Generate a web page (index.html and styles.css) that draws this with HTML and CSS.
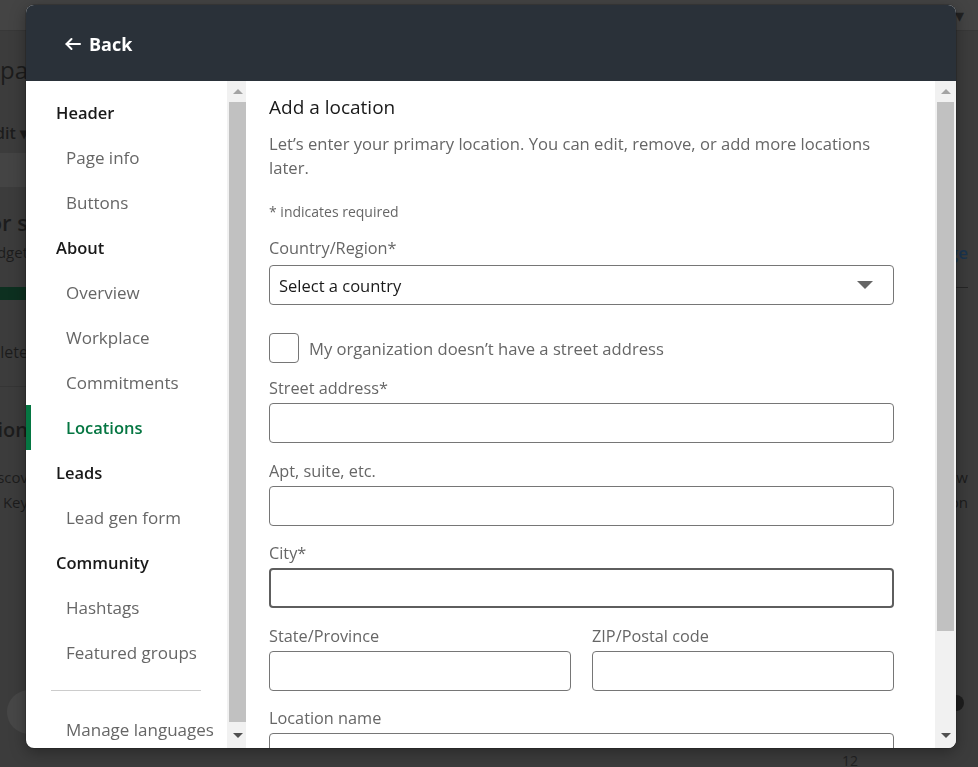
FILE: index.html
```html
<!DOCTYPE html>
<html lang="en">
<head>
  <meta charset="UTF-8">
  <title>Edit page – Add a location</title>
  <link rel="stylesheet" href="styles.css">
</head>
<body>
  <!-- Page underneath the modal (already dimmed) -->
  <div class="page">
    <div class="page-top"></div>
    <div class="page-cols">
      <div class="page-left">
        <div class="pg-title">Company pa</div>
        <div class="pg-drop">Edit &#9662;</div>
        <div class="pg-band"></div>
        <div class="pg-h2">Tips for s</div>
        <div class="pg-sub first">Budget</div>
        <div class="pg-progress"></div>
        <div class="pg-row">Complete</div>
        <div class="pg-h3">Location</div>
        <div class="pg-sub">Discov</div>
        <div class="pg-sub">Key</div>
        <div class="pg-fab"></div>
      </div>
      <div class="page-right">
        <div class="pg-caret">&#9662;</div>
        <div class="pg-link">Manage</div>
        <div class="pg-sub far">Follow</div>
        <div class="pg-sub">Organization</div>
        <div class="pg-dot"></div>
        <div class="pg-count">12</div>
      </div>
    </div>
  </div>

  <!-- Edit modal -->
  <div class="modal">
    <div class="modal-head">
      <svg class="back-arrow" width="16" height="14" viewBox="0 0 16 14" fill="none" stroke="#fff" stroke-width="2" stroke-linecap="round" stroke-linejoin="round">
        <path d="M15 7H1.5"/>
        <path d="M6.5 2 1.5 7l5 5"/>
      </svg>
      <span>Back</span>
    </div>

    <div class="modal-body">
      <nav class="nav">
        <div class="nav-item section">Header</div>
        <div class="nav-item">Page info</div>
        <div class="nav-item">Buttons</div>
        <div class="nav-item section">About</div>
        <div class="nav-item">Overview</div>
        <div class="nav-item">Workplace</div>
        <div class="nav-item">Commitments</div>
        <div class="nav-item active">Locations</div>
        <div class="nav-item section">Leads</div>
        <div class="nav-item">Lead gen form</div>
        <div class="nav-item section">Community</div>
        <div class="nav-item">Hashtags</div>
        <div class="nav-item">Featured groups</div>
        <div class="nav-divider"></div>
        <div class="nav-item">Manage languages</div>
      </nav>

      <div class="scroll scroll-nav">
        <div class="scroll-arrow"><span class="tri-up"></span></div>
        <div class="scroll-thumb"></div>
        <div class="scroll-space"></div>
        <div class="scroll-arrow"><span class="tri-down"></span></div>
      </div>

      <main class="main">
        <h2 class="form-title">Add a location</h2>
        <p class="form-intro">Let’s enter your primary location. You can edit, remove, or add more locations later.</p>
        <p class="form-req">* indicates required</p>

        <label class="field-label tight">Country/Region*</label>
        <div class="select">
          <span>Select a country</span>
          <span class="select-caret"></span>
        </div>

        <div class="check-row">
          <span class="checkbox"></span>
          <span class="check-label">My organization doesn’t have a street address</span>
        </div>

        <label class="field-label first">Street address*</label>
        <div class="input"></div>

        <label class="field-label">Apt, suite, etc.</label>
        <div class="input"></div>

        <label class="field-label">City*</label>
        <div class="input hover"></div>

        <div class="field-pair">
          <div>
            <label class="field-label">State/Province</label>
            <div class="input"></div>
          </div>
          <div>
            <label class="field-label">ZIP/Postal code</label>
            <div class="input"></div>
          </div>
        </div>

        <label class="field-label">Location name</label>
        <div class="input"></div>
      </main>

      <div class="scroll scroll-main">
        <div class="scroll-arrow"><span class="tri-up"></span></div>
        <div class="scroll-thumb"></div>
        <div class="scroll-space"></div>
        <div class="scroll-arrow"><span class="tri-down"></span></div>
      </div>
    </div>
  </div>
</body>
</html>
```

FILE: styles.css
```css
/* Base */
body {
  margin: 0;
  height: 767px;
  overflow: hidden;
  background: #3c3c3c;
  font-family: "Open Sans", "Noto Sans", sans-serif;
}

/* === Dimmed page behind the modal === */
.page {
  height: 100%;
  color: #1c1c1c;
}
.page-top {
  height: 30px;
  background: #444;
  border-bottom: 1px solid #383838;
}
.page-cols {
  display: flex;
  justify-content: space-between;
}
.page-left {
  width: 280px;
  margin-left: -252px;
  text-align: right;
}
.page-right {
  width: 170px;
  margin-right: 10px;
  margin-top: -26px;
  text-align: right;
}
.pg-title {
  font-size: 24px;
  line-height: 30px;
  margin-top: 24px;
}
.pg-drop {
  font-size: 16px;
  font-weight: 600;
  line-height: 24px;
  margin-top: 36px;
}
.pg-band {
  height: 34px;
  margin: 8px -40px 0 0;
  background: #444;
}
.pg-h2 {
  font-size: 22px;
  font-weight: 600;
  line-height: 30px;
  margin-top: 20px;
}
.pg-sub {
  font-size: 15px;
  line-height: 25px;
}
.pg-sub.first {
  margin-top: 3px;
}
.pg-progress {
  height: 13px;
  margin-top: 22px;
  background: #0d3020;
}
.pg-row {
  font-size: 16px;
  line-height: 24px;
  margin-top: 40px;
  padding-bottom: 22px;
  border-bottom: 1px solid #353535;
}
.pg-h3 {
  font-size: 20px;
  font-weight: 600;
  line-height: 28px;
  margin: 29px 0 21px;
}
.pg-fab {
  width: 44px;
  height: 44px;
  border-radius: 50%;
  background: #474747;
  margin: 175px 0 0 259px;
}
.pg-caret {
  font-size: 18px;
  line-height: 20px;
  color: #222;
  margin-right: 4px;
}
.pg-link {
  color: #1a3550;
  font-size: 17px;
  font-weight: 600;
  line-height: 24px;
  margin-top: 216px;
  padding-bottom: 22px;
  border-bottom: 1px solid #262626;
}
.pg-sub.far {
  margin-top: 177px;
}
.pg-dot {
  width: 16px;
  height: 16px;
  border-radius: 50%;
  background: #1e1e1e;
  margin: 180px 4px 0 auto;
}
.pg-count {
  font-size: 14px;
  line-height: 20px;
  margin: 40px 110px 0 0;
  color: #222;
}

/* === Modal === */
.modal {
  position: fixed;
  left: 26px;
  top: 5px;
  width: 930px;
  height: 743px;
  background: #fff;
  border-radius: 8px;
  overflow: hidden;
  display: flex;
  flex-direction: column;
  box-shadow: 0 0 0 1px rgba(0, 0, 0, 0.15), 0 4px 16px rgba(0, 0, 0, 0.35);
}
.modal-head {
  flex: none;
  height: 76px;
  background: #2a3139;
  color: #fff;
  display: flex;
  align-items: center;
  gap: 8px;
  padding: 2px 0 0 39px;
  box-sizing: border-box;
  font-size: 18px;
  font-weight: 700;
}
.back-arrow {
  margin-top: -1px;
}
.modal-body {
  flex: 1;
  display: flex;
  min-height: 0;
}

/* Left navigation */
.nav {
  width: 201px;
  flex: none;
  overflow: hidden;
  padding-top: 9px;
}
.nav-item {
  height: 45px;
  display: flex;
  align-items: center;
  padding-left: 40px;
  font-size: 17px;
  color: #666;
  white-space: nowrap;
}
.nav-item.section {
  padding-left: 30px;
  font-size: 16.5px;
  color: rgba(0, 0, 0, 0.9);
  font-weight: 600;
}
.nav-item.active {
  color: #057642;
  font-weight: 600;
  font-size: 16.5px;
  border-left: 5px solid #057642;
  padding-left: 35px;
}
.nav-divider {
  width: 150px;
  height: 1px;
  margin: 15px 0 16px 25px;
  background: #ccc;
}

/* Fake scrollbars */
.scroll {
  flex: none;
  display: flex;
  flex-direction: column;
  background: #f1f1f1;
}
.scroll-nav {
  width: 19px;
}
.scroll-main {
  width: 21px;
}
.scroll-arrow {
  height: 21px;
  flex: none;
  display: flex;
  align-items: center;
  justify-content: center;
}
.scroll-nav .scroll-arrow {
  padding-left: 2px;
}
.tri-up,
.tri-down {
  width: 0;
  height: 0;
  border-left: 5px solid transparent;
  border-right: 5px solid transparent;
}
.tri-up {
  border-bottom: 5px solid #a3a3a3;
}
.tri-down {
  border-top: 5px solid #505050;
}
.scroll-thumb {
  background: #c1c1c1;
  flex: none;
}
.scroll-nav .scroll-thumb {
  height: 620px;
  margin-left: 2px;
}
.scroll-main .scroll-thumb {
  height: 529px;
  margin: 0 2px;
}
.scroll-space {
  flex: 1;
}
.scroll-arrow:last-child {
  height: 26px;
}

/* Form area */
.main {
  flex: 1;
  min-width: 0;
  overflow: hidden;
  padding: 12px 41px 0 23px;
  color: rgba(0, 0, 0, 0.9);
}
.form-title {
  margin: 0;
  font-size: 19px;
  font-weight: 400;
  line-height: 28px;
}
.form-intro {
  margin: 11px 0 0;
  font-size: 16.6px;
  line-height: 24px;
  color: #666;
}
.form-req {
  margin: 22px 0 0;
  font-size: 14px;
  line-height: 20px;
  color: #666;
}
.field-label {
  display: block;
  margin-top: 15.5px;
  margin-bottom: 3px;
  font-size: 16.3px;
  line-height: 24px;
  color: #666;
}
.field-label.tight {
  margin-top: 14px;
  margin-bottom: 5px;
}
.field-label.first {
  margin-top: 13px;
}
.select,
.input {
  box-sizing: border-box;
  height: 40px;
  border: 1px solid #767676;
  border-radius: 4px;
}
.select {
  display: flex;
  align-items: center;
  justify-content: space-between;
  padding: 0 20px 0 9px;
  font-size: 16.5px;
  color: rgba(0, 0, 0, 0.9);
}
.select-caret {
  width: 0;
  height: 0;
  border-left: 8px solid transparent;
  border-right: 8px solid transparent;
  border-top: 8px solid #666;
}
.input.hover {
  border: 2px solid #5e5e5e;
}
.check-row {
  display: flex;
  align-items: center;
  gap: 10px;
  margin-top: 28px;
}
.checkbox {
  box-sizing: border-box;
  width: 30px;
  height: 30px;
  border: 1px solid #767676;
  border-radius: 4px;
}
.check-label {
  font-size: 16.6px;
  color: #666;
}
.field-pair {
  display: grid;
  grid-template-columns: 1fr 1fr;
  column-gap: 21px;
}
```
